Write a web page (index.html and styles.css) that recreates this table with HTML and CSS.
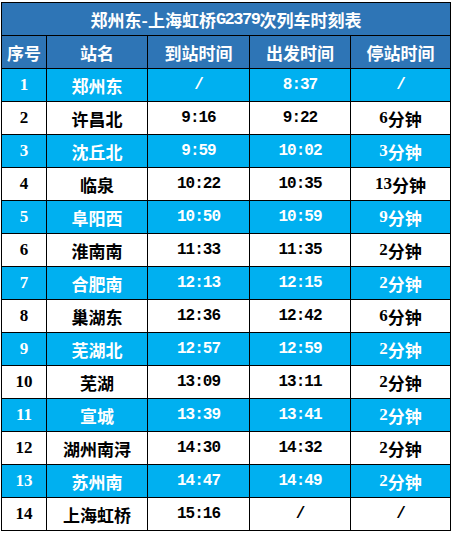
FILE: index.html
```html
<!DOCTYPE html>
<html lang="zh">
<head>
<meta charset="utf-8">
<link rel="stylesheet" href="styles.css">
</head>
<body>
<div class="sheet">
  <div class="grid">
    <div class="cell title">郑州东-上海虹桥<span class="mono">G2379</span>次列车时刻表</div>
    <div class="cell head">序号</div><div class="cell head">站名</div><div class="cell head">到站时间</div><div class="cell head">出发时间</div><div class="cell head">停站时间</div>

    <div class="cell b num">1</div><div class="cell b">郑州东</div><div class="cell b mono">/</div><div class="cell b mono">8:37</div><div class="cell b mono">/</div>
    <div class="cell w num">2</div><div class="cell w">许昌北</div><div class="cell w mono">9:16</div><div class="cell w mono">9:22</div><div class="cell w"><span class="num">6</span>分钟</div>
    <div class="cell b num">3</div><div class="cell b">沈丘北</div><div class="cell b mono">9:59</div><div class="cell b mono">10:02</div><div class="cell b"><span class="num">3</span>分钟</div>
    <div class="cell w num">4</div><div class="cell w">临泉</div><div class="cell w mono">10:22</div><div class="cell w mono">10:35</div><div class="cell w"><span class="num">13</span>分钟</div>
    <div class="cell b num">5</div><div class="cell b">阜阳西</div><div class="cell b mono">10:50</div><div class="cell b mono">10:59</div><div class="cell b"><span class="num">9</span>分钟</div>
    <div class="cell w num">6</div><div class="cell w">淮南南</div><div class="cell w mono">11:33</div><div class="cell w mono">11:35</div><div class="cell w"><span class="num">2</span>分钟</div>
    <div class="cell b num">7</div><div class="cell b">合肥南</div><div class="cell b mono">12:13</div><div class="cell b mono">12:15</div><div class="cell b"><span class="num">2</span>分钟</div>
    <div class="cell w num">8</div><div class="cell w">巢湖东</div><div class="cell w mono">12:36</div><div class="cell w mono">12:42</div><div class="cell w"><span class="num">6</span>分钟</div>
    <div class="cell b num">9</div><div class="cell b">芜湖北</div><div class="cell b mono">12:57</div><div class="cell b mono">12:59</div><div class="cell b"><span class="num">2</span>分钟</div>
    <div class="cell w num">10</div><div class="cell w">芜湖</div><div class="cell w mono">13:09</div><div class="cell w mono">13:11</div><div class="cell w"><span class="num">2</span>分钟</div>
    <div class="cell b num">11</div><div class="cell b">宣城</div><div class="cell b mono">13:39</div><div class="cell b mono">13:41</div><div class="cell b"><span class="num">2</span>分钟</div>
    <div class="cell w num">12</div><div class="cell w">湖州南浔</div><div class="cell w mono">14:30</div><div class="cell w mono">14:32</div><div class="cell w"><span class="num">2</span>分钟</div>
    <div class="cell b num">13</div><div class="cell b">苏州南</div><div class="cell b mono">14:47</div><div class="cell b mono">14:49</div><div class="cell b"><span class="num">2</span>分钟</div>
    <div class="cell w num">14</div><div class="cell w">上海虹桥</div><div class="cell w mono">15:16</div><div class="cell w mono">/</div><div class="cell w mono">/</div>
  </div>
</div>
</body>
</html>
```

FILE: styles.css
```css
html, body {
  margin: 0;
  padding: 0;
  background: #ffffff;
}

.sheet {
  padding: 2px 0 0 1px;
}

.grid {
  display: grid;
  grid-template-columns: 44px 100px 101px 100px 99px;
  grid-auto-rows: 32px;
  gap: 1px;
  padding: 1px;
  background: #000000;
  width: max-content;
  font-family: "Noto Sans CJK SC", sans-serif;
  font-weight: 700;
  font-size: 17px;
}

.cell {
  display: flex;
  align-items: center;
  justify-content: center;
  white-space: nowrap;
}

.title {
  grid-column: 1 / -1;
  background: #2e75b6;
  color: #ffffff;
}

.head {
  background: #2e75b6;
  color: #ffffff;
}

.b {
  background: #00b0f0;
  color: #ffffff;
}

.w {
  background: #ffffff;
  color: #000000;
}

.num {
  font-family: "Liberation Serif", serif;
  font-size: 17px;
}

.mono {
  font-family: "Liberation Mono", monospace;
  font-size: 16px;
  letter-spacing: -1px;
}

.title .mono {
  font-size: 17px;
  letter-spacing: -1.5px;
}
```
